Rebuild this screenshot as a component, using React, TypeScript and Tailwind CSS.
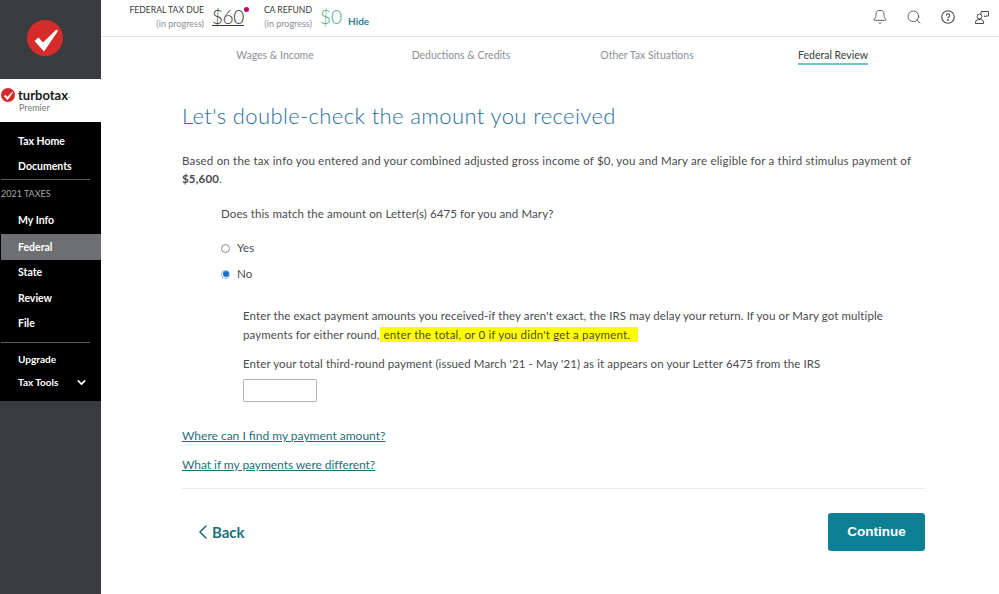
import { Bell, Search, ChevronDown, ChevronLeft } from "lucide-react";

const F = { fontFamily: "Lato, 'Noto Sans', sans-serif" };

function Check({ size }: { size: number }) {
  return (
    <svg width={size} height={size} viewBox="0 0 36 36" className="shrink-0">
      <circle cx="18" cy="18" r="18" fill="#d52b2b" />
      <path d="M7.5 21 L11.5 17.5 L16 22.5 L29.5 9.5 L31 11 L17 31.5 Z" fill="#fff" />
    </svg>
  );
}

function NavItem({ label, active, h = "h-[26px]", nudge = true }: { label: string; active?: boolean; h?: string; nudge?: boolean }) {
  return (
    <div className={`${h} ml-[1px] flex items-center pl-[17px] text-[10.5px] text-white font-bold ${nudge ? "pt-[1px]" : ""} ${active ? "bg-[#6e6f73]" : ""}`}>
      {label}
    </div>
  );
}

function Sidebar() {
  return (
    <aside className="w-[101px] shrink-0 flex flex-col bg-[#3a3b3e]">
      <div className="h-[79px] pt-[20px] pl-[27px]">
        <Check size={36} />
      </div>
      <div className="h-[43px] bg-white pt-[9px] pl-[1px]">
        <div className="flex items-center gap-[3px] h-[14px]">
          <Check size={14} />
          <span className="text-[13px] leading-[14px] font-bold text-[#1a1a1a]">turbotax</span>
          <span className="text-[8px] leading-[14px] text-[#1a1a1a] -ml-[3px] self-end">.</span>
        </div>
        <div className="pl-[18px] mt-[1px] text-[9px] leading-[9px] text-[#777]">Premier</div>
      </div>
      <nav className="h-[279px] bg-black pt-[6px]">
        <NavItem label="Tax Home" />
        <NavItem label="Documents" h="h-[25px]" nudge={false} />
        <div className="ml-[1px] mr-[11px] border-t border-[#5c5c5c]" />
        <div className="h-[27px] pt-[1px] flex items-center text-[9px] text-[#a8a8a8] pl-[1px]">2021 TAXES</div>
        <NavItem label="My Info" h="h-[27px]" />
        <NavItem label="Federal" active />
        <NavItem label="State" h="h-[25px]" nudge={false} />
        <NavItem label="Review" />
        <NavItem label="File" h="h-[24px]" />
        <div className="mt-[7px] ml-[1px] mr-[11px] border-t border-[#5c5c5c]" />
        <div className="h-[23px] mt-[5px] flex items-center pl-[18px] text-[10px] font-bold text-white">Upgrade</div>
        <div className="h-[23px] flex items-center justify-between pl-[18px] pr-[13px] text-[10px] font-bold text-white">
          Tax Tools <ChevronDown size={13} strokeWidth={3} />
        </div>
      </nav>
    </aside>
  );
}

function Header() {
  return (
    <header className="h-[37px] shrink-0 border-b border-[#e2e3e5] flex items-start pl-[28px] pr-[9px]">
      <div className="mt-[4px] text-right leading-[13px] w-[75px] text-[#393a3d] whitespace-nowrap">
        <div className="text-[8.6px]">FEDERAL TAX DUE</div>
        <div className="text-[9px] text-[#8d9096]">(in progress)</div>
      </div>
      <div className="relative mt-[4px] ml-[8px] h-[22px] text-[19px] leading-[26px] font-light tracking-[-0.4px] text-[#393a3d] border-b border-[#393a3d]">
        $60
        <span className="absolute -right-[5px] top-[3px] w-[5px] h-[5px] rounded-full bg-[#c4006e]" />
      </div>
      <div className="mt-[4px] text-right leading-[13px] ml-[20px] text-[#393a3d] whitespace-nowrap">
        <div className="text-[8.6px]">CA REFUND</div>
        <div className="text-[9px] text-[#8d9096]">(in progress)</div>
      </div>
      <div className="mt-[5px] ml-[8px] text-[19px] leading-[24px] font-light text-[#52ad84]">$0</div>
      <a className="mt-[14px] ml-[6px] text-[10px] leading-[14px] font-bold text-[#2d7f93]">Hide</a>
      <div className="ml-auto mt-[9px] flex items-center gap-[18px] text-[#4a4b4e]">
        <Bell size={16} strokeWidth={1.3} />
        <Search size={16} strokeWidth={1.3} />
        <svg width="16" height="16" viewBox="0 0 16 16" fill="none" stroke="currentColor" strokeWidth="1.1">
          <circle cx="8" cy="8" r="6.3" />
          <path d="M6.3 6.5a1.7 1.7 0 1 1 2.6 1.4c-.6.4-.9.7-.9 1.3" />
          <circle cx="8" cy="11" r=".4" />
        </svg>
        <svg width="16" height="16" viewBox="0 0 16 16" fill="none" stroke="currentColor" strokeWidth="1">
          <circle cx="5.5" cy="7.5" r="2.4" />
          <path d="M1.5 14.5v-1.5a3 3 0 0 1 3-2.5h2a3 3 0 0 1 3 2.5v1.5z" />
          <path d="M7 5V2.5h7.5v4.5H12l-1 1v-1h-1" />
        </svg>
      </div>
    </header>
  );
}

function Tabs() {
  const tabs = ["Wages & Income", "Deductions & Credits", "Other Tax Situations", "Federal Review"];
  return (
    <div className="h-[28px] shrink-0 grid grid-cols-[186px_186px_186px_186px] pl-[81px] text-[10.5px] text-[#8d9096]">
      {tabs.map((t, i) => (
        <div key={t} className="flex justify-center">
          <div className={`h-[28px] pt-[10px] leading-[16px] ${i === 3 ? "text-[#393a3d] border-b-2 border-[#6fc3c9]" : ""}`}>{t}</div>
        </div>
      ))}
    </div>
  );
}

export default function App() {
  return (
    <div className="w-[999px] h-[594px] flex bg-white overflow-hidden" style={F}>
      <Sidebar />
      <main className="flex-1 flex flex-col min-w-0">
        <Header />
        <Tabs />
        <div className="pl-[81px] pr-[74px] pt-[36px] text-[11.5px] text-[#4a4b4e]">
          <h1 className="text-[22px] leading-[30px] font-light tracking-[0.38px] text-[#1f6f9f]">Let's double-check the amount you received</h1>
          <p className="mt-[21px] leading-[18px] tracking-[0.19px]">
            Based on the tax info you entered and your combined adjusted gross income of $0, you and Mary are eligible for a third stimulus payment of <b>$5,600</b>.
          </p>
          <div className="pl-[39px] tracking-[0.1px]">
            <p className="mt-[16px] leading-[20px]">Does this match the amount on Letter(s) 6475 for you and Mary?</p>
            <div className="mt-[11px] h-[26px] flex items-center gap-[7px]">
              <span className="w-[9px] h-[9px] rounded-full border border-[#8a8a8a]" />
              Yes
            </div>
            <div className="h-[26px] flex items-center gap-[7px]">
              <span className="w-[9px] h-[9px] rounded-full border border-[#8fb6e6] flex items-center justify-center">
                <span className="w-[6px] h-[6px] rounded-full bg-[#1a6fd6]" />
              </span>
              No
            </div>
            <div className="pl-[22px] mt-[19px]">
              <p className="leading-[19px]">
                Enter the exact payment amounts you received-if they aren't exact, the IRS may delay your return. If you or Mary got multiple payments for either round,
                <span className="bg-[#ffff00] py-[1px] ml-[1px] pr-[5px] tracking-[0.19px]"> enter the total, or 0 if you didn't get a payment.&nbsp;</span>
              </p>
              <p className="mt-[10px] leading-[19px]">Enter your total third-round payment (issued March '21 - May '21) as it appears on your Letter 6475 from the IRS</p>
              <div className="mt-[6px] w-[74px] h-[23px] border border-[#b5b5b5] rounded-[2px]" />
            </div>
          </div>
          <div className="mt-[24px] text-[12px] leading-[20px] text-[#1f6f7d] underline"><a>Where can I find my payment amount?</a></div>
          <div className="mt-[9px] text-[12px] tracking-[-0.05px] leading-[20px] text-[#1f6f7d] underline"><a>What if my payments were different?</a></div>
          <div className="mt-[13px] border-t border-[#e9eaeb]" />
          <div className="mt-[24px] flex items-center justify-between">
            <button className="ml-[9px] flex items-center text-[15px] font-bold text-[#1f6f7d]"><ChevronLeft size={24} strokeWidth={1.6} className="-mr-[3px]" />Back</button>
            <button className="w-[97px] h-[38px] rounded-[3px] bg-[#0d7f93] text-white text-[13.5px] font-bold" style={{ fontFamily: "'Liberation Sans', sans-serif" }}>Continue</button>
          </div>
        </div>
      </main>
    </div>
  );
}
